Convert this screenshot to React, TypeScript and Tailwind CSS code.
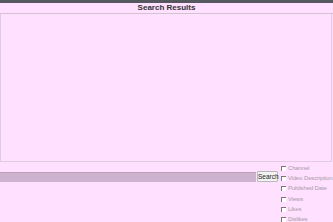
import React from 'react';

const fields = ['Channel', 'Video Description', 'Published Date', 'Views', 'Likes', 'Dislikes'];

export default function App() {
  return (
    <div className="w-[333px] h-[222px] overflow-hidden bg-[#ffe0ff]" style={{ fontFamily: '"Liberation Sans", Arial, sans-serif' }}>
      <div className="h-[3px] bg-[#55595f]" />
      <div className="h-[11px] border-b border-[#d2c2d2] text-center text-[8px] leading-[10px] font-bold text-[#333]">
        Search Results
      </div>
      <div className="h-[148px] border-l border-r border-b border-[#e0cce0] mr-[1px]" />
      <div className="flex items-start">
        <input
          className="mt-[10px] h-[10px] flex-1 min-w-0 bg-[#cdb3cd] border-t border-[#b9a0b9] outline-none"
          readOnly
        />
        <button className="mt-[9px] ml-[1px] h-[11px] w-[21px] bg-[#f2f2f2] border border-[#b8b8b8] rounded-[1px] text-[6.5px] leading-[9px] text-[#222]">
          Search
        </button>
        <div className="ml-[3px] w-[52px] pt-[1px]">
          {fields.map(f => (
            <div key={f} className="flex items-center h-[10.3px]">
              <span className="w-[5px] h-[5px] border-l border-t border-[#777] bg-white mr-[2px]" />
              <span className="text-[6px] tracking-[-0.15px] text-[#a89ca8] whitespace-nowrap">{f}</span>
            </div>
          ))}
        </div>
      </div>
    </div>
  );
}
